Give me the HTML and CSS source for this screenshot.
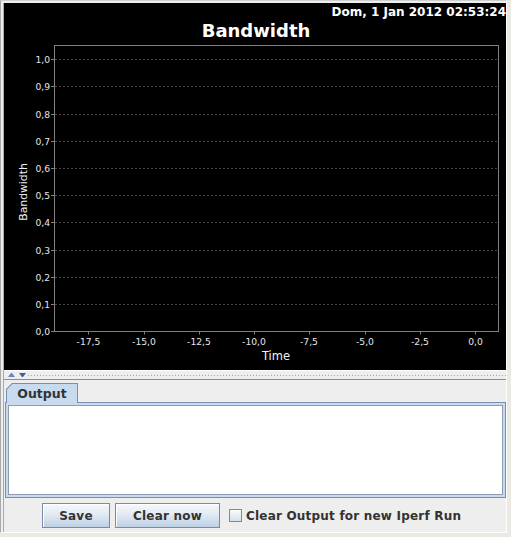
FILE: index.html
```html
<!DOCTYPE html>
<html>
<head>
<meta charset="utf-8">
<link rel="stylesheet" href="styles.css">
</head>
<body>
<div class="window">
  <div class="inner">
    <svg class="chart" width="502" height="367" viewBox="4 3 502 367" xmlns="http://www.w3.org/2000/svg">
      <rect x="4" y="3" width="502" height="367" fill="#000"/>
      <text class="date" x="506" y="16" text-anchor="end">Dom, 1 Jan 2012 02:53:24</text>
      <text class="title" x="256" y="37" text-anchor="middle">Bandwidth</text>
      <g class="grid">
        <line x1="55" x2="498" y1="304.5" y2="304.5"/>
        <line x1="55" x2="498" y1="277.5" y2="277.5"/>
        <line x1="55" x2="498" y1="250.5" y2="250.5"/>
        <line x1="55" x2="498" y1="222.5" y2="222.5"/>
        <line x1="55" x2="498" y1="195.5" y2="195.5"/>
        <line x1="55" x2="498" y1="168.5" y2="168.5"/>
        <line x1="55" x2="498" y1="141.5" y2="141.5"/>
        <line x1="55" x2="498" y1="114.5" y2="114.5"/>
        <line x1="55" x2="498" y1="86.5" y2="86.5"/>
        <line x1="55" x2="498" y1="59.5" y2="59.5"/>
      </g>
      <rect class="frame" x="54.5" y="45.5" width="444" height="286"/>
      <g class="ticks">
        <line x1="51" x2="54" y1="331.5" y2="331.5"/>
        <line x1="51" x2="54" y1="304.5" y2="304.5"/>
        <line x1="51" x2="54" y1="277.5" y2="277.5"/>
        <line x1="51" x2="54" y1="250.5" y2="250.5"/>
        <line x1="51" x2="54" y1="222.5" y2="222.5"/>
        <line x1="51" x2="54" y1="195.5" y2="195.5"/>
        <line x1="51" x2="54" y1="168.5" y2="168.5"/>
        <line x1="51" x2="54" y1="141.5" y2="141.5"/>
        <line x1="51" x2="54" y1="114.5" y2="114.5"/>
        <line x1="51" x2="54" y1="86.5" y2="86.5"/>
        <line x1="51" x2="54" y1="59.5" y2="59.5"/>
        <line x1="88.5" x2="88.5" y1="332" y2="334.5"/>
        <line x1="144.5" x2="144.5" y1="332" y2="334.5"/>
        <line x1="199.5" x2="199.5" y1="332" y2="334.5"/>
        <line x1="254.5" x2="254.5" y1="332" y2="334.5"/>
        <line x1="309.5" x2="309.5" y1="332" y2="334.5"/>
        <line x1="365.5" x2="365.5" y1="332" y2="334.5"/>
        <line x1="420.5" x2="420.5" y1="332" y2="334.5"/>
        <line x1="475.5" x2="475.5" y1="332" y2="334.5"/>
      </g>
      <g class="tick-label" text-anchor="end">
        <text x="50" y="335">0,0</text>
        <text x="50" y="308">0,1</text>
        <text x="50" y="281">0,2</text>
        <text x="50" y="254">0,3</text>
        <text x="50" y="226">0,4</text>
        <text x="50" y="199">0,5</text>
        <text x="50" y="172">0,6</text>
        <text x="50" y="145">0,7</text>
        <text x="50" y="118">0,8</text>
        <text x="50" y="90">0,9</text>
        <text x="50" y="63">1,0</text>
      </g>
      <g class="tick-label" text-anchor="middle">
        <text x="88.5" y="344.5">-17,5</text>
        <text x="144" y="344.5">-15,0</text>
        <text x="199" y="344.5">-12,5</text>
        <text x="254" y="344.5">-10,0</text>
        <text x="309" y="344.5">-7,5</text>
        <text x="365" y="344.5">-5,0</text>
        <text x="420" y="344.5">-2,5</text>
        <text x="475.5" y="344.5">0,0</text>
      </g>
      <text class="axis-label" x="276" y="360" text-anchor="middle">Time</text>
      <text class="axis-label axis-label-y" transform="translate(26.5 192) rotate(-90)" text-anchor="middle">Bandwidth</text>
    </svg>

    <div class="splitter">
      <span class="arrow-up"></span>
      <span class="arrow-down"></span>
      <span class="dots"></span>
    </div>

    <div class="lower">
      <div class="tabstrip">
        <div class="tab"><div class="tab-face">Output</div></div>
      </div>
      <div class="tab-content">
        <div class="textarea"></div>
      </div>
      <div class="buttons">
        <button class="btn btn-save">Save</button>
        <button class="btn btn-clear">Clear now</button>
        <label class="check">
          <span class="box"></span>
          <span class="check-text">Clear Output for new Iperf Run</span>
        </label>
      </div>
    </div>
  </div>
</div>
</body>
</html>
```

FILE: styles.css
```css
html, body {
  margin: 0;
  padding: 0;
}

body {
  background: #ebe9e3;
  font-family: "DejaVu Sans", "Liberation Sans", sans-serif;
}

.window {
  width: 507px;
  height: 533px;
  box-sizing: border-box;
  border-left: 1px solid #a9a9a9;
  border-top: 1px solid #cfcfcf;
  border-right: 1px solid #ffffff;
  border-bottom: 1px solid #ffffff;
  padding: 2px 0 0 2px;
  background: #eeeeee;
  display: flex;
}

.inner {
  width: 502px;
  border-left: 1px solid #a9a9a9;
  display: flex;
  flex-direction: column;
}

.chart {
  display: block;
  width: 502px;
  height: 367px;
  flex: none;
}

.chart text {
  font-family: "DejaVu Sans", "Liberation Sans", sans-serif;
}

.date {
  font-size: 12px;
  font-weight: bold;
  fill: #ffffff;
}

.title {
  font-size: 18px;
  font-weight: bold;
  fill: #ffffff;
}

.grid line {
  stroke: #454545;
  stroke-width: 1;
  stroke-dasharray: 2 2;
}

.frame {
  fill: none;
  stroke: #808080;
  stroke-width: 1;
}

.ticks line {
  stroke: #808080;
  stroke-width: 1;
}

.tick-label {
  font-size: 9.2px;
  fill: #e6e6e6;
}

.axis-label {
  font-size: 11.5px;
  fill: #f2f2f2;
}

.axis-label-y {
  font-size: 10.8px;
}

/* splitter */
.splitter {
  flex: none;
  height: 8px;
  border-top: 1px solid #ffffff;
  display: flex;
  align-items: flex-start;
  padding-left: 4px;
}

.arrow-up {
  margin-top: 2px;
  width: 1px;
  height: 0;
  border-left: 3px solid transparent;
  border-right: 3px solid transparent;
  border-bottom: 4px solid #6388c8;
}

.arrow-down {
  margin-top: 2px;
  margin-left: 4px;
  width: 1px;
  height: 0;
  border-left: 3px solid transparent;
  border-right: 3px solid transparent;
  border-top: 4px solid #3f5f9e;
}

.dots {
  margin-top: 4px;
  margin-left: 2px;
  flex: 1;
  height: 1px;
  background-image: repeating-linear-gradient(to right, #a4a4a4 0 1px, transparent 1px 3px);
}

/* lower panel */
.lower {
  flex: 1;
  border-top: 1px solid #7b8db0;
  display: flex;
  flex-direction: column;
}

.tabstrip {
  height: 22px;
  box-sizing: border-box;
  padding-top: 3px;
  display: flex;
}

.tab {
  position: relative;
  z-index: 1;
  margin-left: 2px;
  margin-bottom: -1px;
  width: 72px;
  height: 20px;
  box-sizing: border-box;
  padding: 1px 1px 0 1px;
  background: #7b8db0;
  clip-path: polygon(6px 0, 100% 0, 100% 100%, 0 100%, 0 6px);
}

.tab-face {
  height: 100%;
  background: #c8daee;
  clip-path: polygon(5.5px 0, 100% 0, 100% 100%, 0 100%, 0 5.5px);
  display: flex;
  align-items: center;
  justify-content: center;
  font-size: 12.5px;
  font-weight: bold;
  color: #333333;
  padding-bottom: 1px;
  box-sizing: border-box;
}

.tab-content {
  margin-left: 1px;
  height: 96px;
  box-sizing: border-box;
  border: 1px solid #7b8db0;
  background: #c8daee;
  padding: 2px;
}

.textarea {
  height: 100%;
  box-sizing: border-box;
  border: 1px solid #8d9cb2;
  background: #ffffff;
}

.buttons {
  height: 34px;
  box-sizing: border-box;
  padding: 5px 0 0 38px;
  display: flex;
  align-items: flex-start;
}

.btn {
  margin: 0;
  height: 25px;
  box-sizing: border-box;
  border: 1px solid #7a8aa6;
  border-radius: 0;
  background: linear-gradient(to bottom, #f6f8fb 0%, #e2eaf3 45%, #bdd0e4 100%);
  box-shadow: inset 1px 1px 0 #ffffff;
  font-family: "DejaVu Sans", "Liberation Sans", sans-serif;
  font-size: 12px;
  font-weight: bold;
  color: #333333;
  letter-spacing: 0.2px;
  padding: 0;
  display: flex;
  align-items: center;
  justify-content: center;
}

.btn-save {
  width: 68px;
}

.btn-clear {
  width: 105px;
  margin-left: 5px;
}

.check {
  margin-left: 9px;
  height: 25px;
  display: flex;
  align-items: center;
}

.box {
  width: 13px;
  height: 13px;
  box-sizing: border-box;
  border: 1px solid #7a8aa6;
  background: linear-gradient(to bottom, #fbfcfd 0%, #d4dfeb 100%);
}

.check-text {
  margin-left: 4px;
  font-size: 12px;
  font-weight: bold;
  color: #333333;
  letter-spacing: 0.2px;
}
```
